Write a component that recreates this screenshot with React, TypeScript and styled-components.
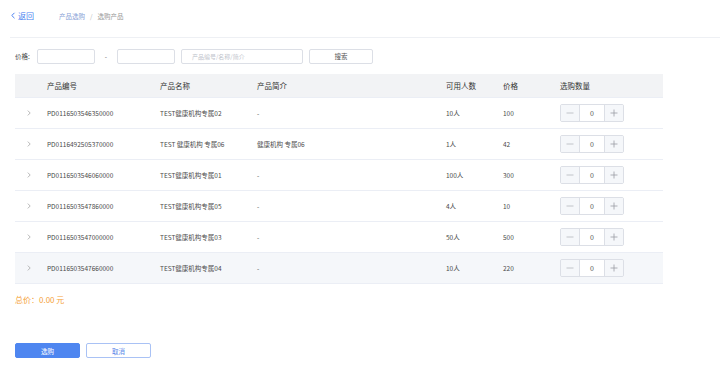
import React from "react";
import styled, { createGlobalStyle } from "styled-components";

const Global = createGlobalStyle`
  html, body { margin: 0; padding: 0; background: #fff; }
  body { font-family: "Noto Sans CJK SC", "Noto Sans", Arial, sans-serif; color: #606266; }
  * { box-sizing: border-box; }
`;

const Page = styled.div`
  width: 720px;
  height: 388px;
  position: relative;
  overflow: hidden;
`;

const Header = styled.div`
  margin-left: 10px;
  height: 38px;
  border-bottom: 1px solid #eef0f4;
  display: flex;
  align-items: center;
  padding-bottom: 6px;
`;

const Back = styled.span`
  color: #4a7ff0;
  font-size: 8px;
  width: 49px;
  display: flex;
  align-items: center;
  gap: 2px;
`;

const Crumb = styled.span<{ $active?: boolean }>`
  font-size: 6.5px;
  color: ${(p) => (p.$active ? "#8a9fd6" : "#999")};
`;

const Sep = styled.span`
  font-size: 6.5px;
  color: #bbb;
  margin: 0 5px;
`;

const Filter = styled.div`
  display: flex;
  align-items: center;
  margin-top: 10px;
  padding-left: 15px;
  height: 16px;
`;

const Label = styled.span`
  font-size: 6.5px;
  color: #444;
  width: 22px;
`;

const Input = styled.div<{ $w: number; $gap?: number }>`
  width: ${(p) => p.$w}px;
  margin-left: ${(p) => p.$gap ?? 0}px;
  height: 15px;
  border: 1px solid #dcdfe6;
  border-radius: 2px;
  font-size: 6px;
  color: #c0c4cc;
  display: flex;
  align-items: center;
  padding-left: 10px;
`;

const Dash = styled.span`
  font-size: 6.5px;
  color: #666;
  width: 22px;
  text-align: center;
`;

const SearchBtn = styled.div`
  width: 64px;
  height: 15px;
  margin-left: 6px;
  border: 1px solid #dcdfe6;
  border-radius: 2px;
  font-size: 6.5px;
  color: #555;
  display: flex;
  align-items: center;
  justify-content: center;
`;

const Table = styled.div`
  margin: 10px 0 0 15px;
  width: 648px;
`;

const cols = "32px 113px 97px 189px 57px 57px 103px";

const HeadRow = styled.div`
  display: grid;
  grid-template-columns: ${cols};
  height: 24px;
  align-items: center;
  background: #f2f3f5;
  border-bottom: 1px solid #ebeef5;
`;

const HeadCell = styled.div`
  font-size: 7.5px;
  color: #333;
`;

const Row = styled.div<{ $hover?: boolean }>`
  display: grid;
  grid-template-columns: ${cols};
  height: 31px;
  align-items: center;
  background: ${(p) => (p.$hover ? "#f5f7fa" : "#fff")};
  border-bottom: 1px solid #ebeef5;
`;

const Cell = styled.div`
  font-size: 6.5px;
  color: #4a4a4a;
  white-space: nowrap;
`;

const Arrow = styled.div`
  padding-left: 12px;
  display: flex;
  align-items: center;
`;

const Stepper = styled.div`
  display: flex;
  width: 64px;
  height: 18px;
  border: 1px solid #dcdfe6;
  border-radius: 2px;
  overflow: hidden;
`;

const StepBtn = styled.div<{ $left?: boolean }>`
  width: 19px;
  background: #f5f7fa;
  display: flex;
  align-items: center;
  justify-content: center;
  ${(p) => (p.$left ? "border-right: 1px solid #dcdfe6;" : "border-left: 1px solid #dcdfe6;")}
`;

const StepVal = styled.div`
  flex: 1;
  background: #fff;
  font-size: 7px;
  color: #555;
  display: flex;
  align-items: center;
  justify-content: center;
`;

const Total = styled.div`
  margin: 9px 0 0 15px;
  font-size: 8px;
  color: #f5a33b;
  height: 14px;
  line-height: 14px;
`;

const Actions = styled.div`
  display: flex;
  gap: 6px;
  margin: 36px 0 0 15px;
`;

const Btn = styled.div<{ $primary?: boolean }>`
  width: 65px;
  height: 15px;
  border-radius: 2px;
  font-size: 6.5px;
  display: flex;
  align-items: center;
  justify-content: center;
  background: ${(p) => (p.$primary ? "#4e86f0" : "#fff")};
  color: ${(p) => (p.$primary ? "#fff" : "#5b87e8")};
  border: 1px solid ${(p) => (p.$primary ? "#4e86f0" : "#a9c2f5")};
`;

const rows = [
  ["PD0116503546350000", "TEST健康机构专属02", "-", "10人", "100"],
  ["PD0116492505370000", "TEST 健康机构 专属06", "健康机构 专属06", "1人", "42"],
  ["PD0116503546060000", "TEST健康机构专属01", "-", "100人", "300"],
  ["PD0116503547860000", "TEST健康机构专属05", "-", "4人", "10"],
  ["PD0116503547000000", "TEST健康机构专属03", "-", "50人", "500"],
  ["PD0116503547660000", "TEST健康机构专属04", "-", "10人", "220"],
];

const Minus = () => (
  <svg width="8" height="8" viewBox="0 0 8 8">
    <path d="M0.5 4 H7.5" stroke="#b4b7bd" strokeWidth="0.8" />
  </svg>
);
const Plus = () => (
  <svg width="8" height="8" viewBox="0 0 8 8">
    <path d="M0.5 4 H7.5 M4 0.5 V7.5" stroke="#9a9da3" strokeWidth="0.8" />
  </svg>
);

export default function App() {
  return (
    <Page>
      <Global />
      <Header>
        <Back>
          <svg width="6" height="7" viewBox="0 0 6 7">
            <path d="M4.5 0.8 L1.8 3.5 L4.5 6.2" fill="none" stroke="#4a7ff0" strokeWidth="1" />
          </svg>
          返回
        </Back>
        <Crumb $active>产品选购</Crumb>
        <Sep>/</Sep>
        <Crumb>选购产品</Crumb>
      </Header>
      <Filter>
        <Label>价格:</Label>
        <Input $w={58} />
        <Dash>-</Dash>
        <Input $w={58} />
        <Input $w={122} $gap={6}>产品编号/名称/简介</Input>
        <SearchBtn>搜索</SearchBtn>
      </Filter>
      <Table>
        <HeadRow>
          <div />
          <HeadCell>产品编号</HeadCell>
          <HeadCell>产品名称</HeadCell>
          <HeadCell>产品简介</HeadCell>
          <HeadCell>可用人数</HeadCell>
          <HeadCell>价格</HeadCell>
          <HeadCell>选购数量</HeadCell>
        </HeadRow>
        {rows.map((r, i) => (
          <Row key={i} $hover={i === rows.length - 1}>
            <Arrow>
              <svg width="4" height="6" viewBox="0 0 4 6">
                <path d="M0.8 0.6 L3.2 3 L0.8 5.4" fill="none" stroke="#999" strokeWidth="0.7" />
              </svg>
            </Arrow>
            <Cell>{r[0]}</Cell>
            <Cell>{r[1]}</Cell>
            <Cell>{r[2]}</Cell>
            <Cell>{r[3]}</Cell>
            <Cell>{r[4]}</Cell>
            <div>
              <Stepper>
                <StepBtn $left>
                  <Minus />
                </StepBtn>
                <StepVal>0</StepVal>
                <StepBtn>
                  <Plus />
                </StepBtn>
              </Stepper>
            </div>
          </Row>
        ))}
      </Table>
      <Total>总价：0.00 元</Total>
      <Actions>
        <Btn $primary>选购</Btn>
        <Btn>取消</Btn>
      </Actions>
    </Page>
  );
}
